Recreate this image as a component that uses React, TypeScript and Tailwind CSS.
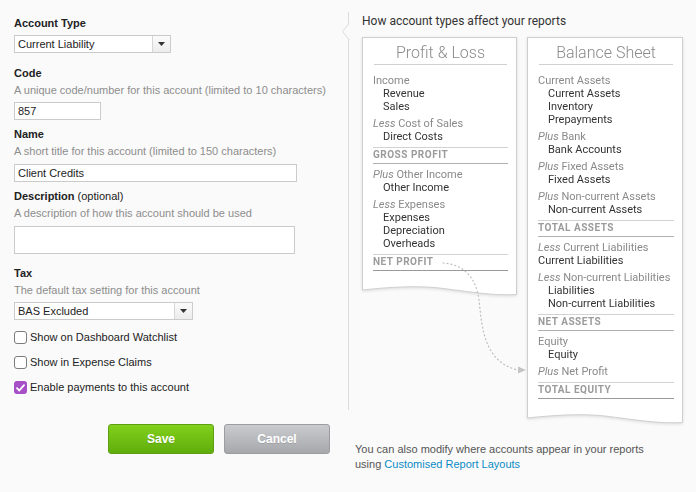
import React from "react";

function Label({ children, extra }: { children: React.ReactNode; extra?: string }) {
  return (
    <div className="leading-[15px] text-[11px] font-bold text-[#222]">
      {children}
      {extra && <span className="font-normal"> {extra}</span>}
    </div>
  );
}

function Help({ children }: { children: React.ReactNode }) {
  return <div className="mt-[2px] leading-[15px] text-[11px] text-[#8d8d8d]">{children}</div>;
}

function Select({ value, width }: { value: string; width: string }) {
  return (
    <div className={"flex h-[18px] border border-[#cbcbcb] bg-white " + width}>
      <div className="flex-1 pl-[3px] leading-[16px] text-[11px] text-[#222]">{value}</div>
      <div className="flex w-[18px] items-center justify-center border-l border-[#d6d6d6] bg-linear-to-b from-[#fbfbfb] to-[#ececec]">
        <svg width="7" height="4" viewBox="0 0 7 4">
          <path d="M0 0h7L3.5 4z" fill="#333" />
        </svg>
      </div>
    </div>
  );
}

function Check({ checked, children }: { checked?: boolean; children: React.ReactNode }) {
  return (
    <div className="mt-[10px] flex h-[15px] items-center gap-[3px]">
      {checked ? (
        <div className="flex h-[13px] w-[13px] items-center justify-center rounded-[3px] bg-[#a74fc6]">
          <svg width="9" height="8" viewBox="0 0 9 8">
            <path d="M1 4.2l2.3 2.3L8 1.2" fill="none" stroke="#fff" strokeWidth="1.8" strokeLinecap="round" strokeLinejoin="round" />
          </svg>
        </div>
      ) : (
        <div className="h-[13px] w-[13px] rounded-[3px] border border-[#7d7d7d] bg-white" />
      )}
      <span className="text-[11px] leading-[15px] text-[#222]">{children}</span>
    </div>
  );
}

function Head({ pre, children, first }: { pre?: string; children: React.ReactNode; first?: boolean }) {
  return (
    <div className={first ? "leading-[13px] text-[#8a8a8a]" : "mt-[4px] leading-[13px] text-[#8a8a8a]"}>
      {pre && <span className="italic">{pre} </span>}
      {children}
    </div>
  );
}

function Item({ children, flat }: { children: React.ReactNode; flat?: boolean }) {
  return <div className={flat ? "leading-[13px] text-[#333]" : "pl-[10px] leading-[13px] text-[#333]"}>{children}</div>;
}

function Total({ children, last }: { children: React.ReactNode; last?: boolean }) {
  return (
    <>
      <div className="mt-[4px] h-px bg-[#d2d2d2]" />
      <div className="pb-[2px] text-[10px] font-bold leading-[13px] tracking-[0.05em] text-[#9b9b9b]">{children}</div>
      <div className={last ? "h-px bg-[#9a9a9a]" : "h-px bg-[#b0b0b0]"} />
    </>
  );
}

function Card({ title, width, children }: { title: string; width: number; children: React.ReactNode }) {
  const w = width;
  return (
    <div className="flex flex-col drop-shadow-[0_1px_1.5px_rgba(0,0,0,0.12)]">
      <div className="border border-b-0 border-[#cfcfcf] bg-white pb-[15px] pl-[10px] pr-[8px] pt-[5px]">
        <div className="text-center text-[16px] font-light leading-[20px] text-[#8a8a8a]">{title}</div>
        <div className="mx-px mt-[1px] h-px bg-[#d0d0d0]" />
        <div className="mt-[9px] text-[11px]">{children}</div>
      </div>
      <svg width={w} height="12" viewBox={`0 0 ${w} 12`} className="block">
        <path
          d={`M0.5,0 V4 C${w * 0.18},1 ${w * 0.35},-0.5 ${w * 0.5},2 C${w * 0.68},5.5 ${w * 0.85},10 ${w - 0.5},8.5 V0`}
          fill="#fff"
          stroke="#cfcfcf"
        />
      </svg>
    </div>
  );
}

export default function App() {
  return (
    <div className="relative h-[492px] w-[696px] overflow-hidden bg-[#fafafa] font-['Liberation_Sans',Arial,sans-serif]">
      <div className="flex h-[410px]">
        {/* form */}
        <div className="w-[348px] pl-[14px] pt-[16px]">
          <Label>Account Type</Label>
          <div className="mt-[4px]">
            <Select value="Current Liability" width="w-[157px]" />
          </div>

          <div className="mt-[13px]">
            <Label>Code</Label>
          </div>
          <Help>A unique code/number for this account (limited to 10 characters)</Help>
          <input
            readOnly
            value="857"
            className="mt-[4px] block h-[18px] w-[87px] border border-[#cbcbcb] bg-white px-[3px] text-[11px] text-[#222] outline-none"
          />

          <div className="mt-[7px]">
            <Label>Name</Label>
          </div>
          <Help>A short title for this account (limited to 150 characters)</Help>
          <input
            readOnly
            value="Client Credits"
            className="mt-[5px] block h-[18px] w-[283px] border border-[#cbcbcb] bg-white px-[3px] text-[11px] text-[#222] outline-none"
          />

          <div className="mt-[7px]">
            <Label extra="(optional)">Description</Label>
          </div>
          <Help>A description of how this account should be used</Help>
          <div className="mt-[5px] h-[28px] w-[281px] border border-[#cbcbcb] bg-white" />

          <div className="mt-[12px]">
            <Label>Tax</Label>
          </div>
          <Help>The default tax setting for this account</Help>
          <div className="mt-[4px]">
            <Select value="BAS Excluded" width="w-[179px]" />
          </div>

          <Check>Show on Dashboard Watchlist</Check>
          <Check>Show in Expense Claims</Check>
          <Check checked>Enable payments to this account</Check>
        </div>

        {/* reports panel */}
        <div className="relative mt-[12px] flex-1 border-l border-[#dcdcdc] pl-[13px] font-['Roboto',sans-serif]">
          <svg width="9" height="18" viewBox="0 0 9 18" className="absolute left-[-8px] top-[11px]">
            <path d="M8 0 L1 8.5 L8 17 L9 17 L9 0z" fill="#fafafa" />
            <path d="M8.5 0 L1.5 8.5 L8.5 17" fill="none" stroke="#dcdcdc" />
          </svg>
          <div className="pt-px text-[12px] leading-[16px] text-[#333]">How account types affect your reports</div>
          <div className="mt-[8px] flex items-start gap-[10px]">
            <Card title="Profit & Loss" width={155}>
              <Head first>Income</Head>
              <Item>Revenue</Item>
              <Item>Sales</Item>
              <Head pre="Less">Cost of Sales</Head>
              <Item>Direct Costs</Item>
              <Total>GROSS PROFIT</Total>
              <Head pre="Plus">Other Income</Head>
              <Item>Other Income</Item>
              <Head pre="Less">Expenses</Head>
              <Item>Expenses</Item>
              <Item>Depreciation</Item>
              <Item>Overheads</Item>
              <Total last>NET PROFIT</Total>
            </Card>
            <Card title="Balance Sheet" width={156}>
              <Head first>Current Assets</Head>
              <Item>Current Assets</Item>
              <Item>Inventory</Item>
              <Item>Prepayments</Item>
              <Head pre="Plus">Bank</Head>
              <Item>Bank Accounts</Item>
              <Head pre="Plus">Fixed Assets</Head>
              <Item>Fixed Assets</Item>
              <Head pre="Plus">Non-current Assets</Head>
              <Item>Non-current Assets</Item>
              <Total>TOTAL ASSETS</Total>
              <Head pre="Less">Current Liabilities</Head>
              <Item flat>Current Liabilities</Item>
              <Head pre="Less">Non-current Liabilities</Head>
              <Item>Liabilities</Item>
              <Item>Non-current Liabilities</Item>
              <Total>NET ASSETS</Total>
              <Head>Equity</Head>
              <Item>Equity</Item>
              <Head pre="Plus">Net Profit</Head>
              <Total last>TOTAL EQUITY</Total>
            </Card>
          </div>
        </div>
      </div>

      {/* bottom row */}
      <div className="flex">
        <div className="flex w-[348px] gap-[10px] pl-[108px] pt-[14px]">
          <button className="h-[30px] w-[106px] rounded-[3px] border border-[#5e9f12] bg-linear-to-b from-[#82d11c] to-[#5fad0a] text-[12px] font-bold text-white [text-shadow:0_1px_0_rgba(0,0,0,0.15)]">
            Save
          </button>
          <button className="h-[30px] w-[106px] rounded-[3px] border border-[#9b9da0] bg-linear-to-b from-[#c9cbce] to-[#a6a8ab] text-[12px] font-bold text-white [text-shadow:0_1px_0_rgba(0,0,0,0.12)]">
            Cancel
          </button>
        </div>
        <div className="pl-[7px] pt-[32px] text-[11px] leading-[15px] text-[#555]">
          You can also modify where accounts appear in your reports
          <br />
          using <span className="text-[#0b8bc4]">Customised Report Layouts</span>
        </div>
      </div>

      {/* net profit connector */}
      <svg width="696" height="492" className="pointer-events-none absolute left-0 top-0 z-10">
        <path
          d="M443,263 C462,264 476,276 479,300 C482,328 484,362 518,370"
          fill="none"
          stroke="#bdbdbd"
          strokeWidth="1.2"
          strokeDasharray="1 3"
          strokeLinecap="round"
        />
        <path d="M518,366.5 L526,370 L518,373.5z" fill="#c4c4c4" />
      </svg>
    </div>
  );
}
